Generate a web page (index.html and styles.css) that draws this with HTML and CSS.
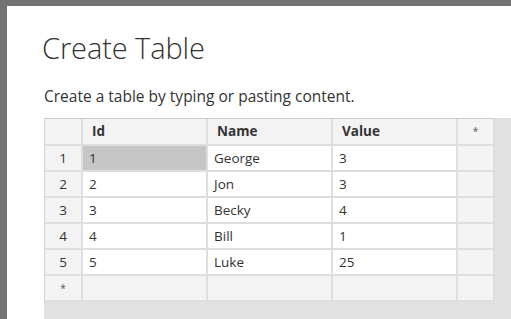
FILE: index.html
```html
<!DOCTYPE html>
<html>
<head>
<meta charset="utf-8">
<link rel="stylesheet" href="styles.css">
</head>
<body>
<div class="dialog">
  <h1 class="title">Create Table</h1>
  <p class="subtitle">Create a table by typing or pasting content.</p>
  <div class="table-area">
    <div class="grid">
      <div class="cell head"></div>
      <div class="cell head col">Id</div>
      <div class="cell head col">Name</div>
      <div class="cell head col">Value</div>
      <div class="cell head star">*</div>

      <div class="cell head num">1</div>
      <div class="cell sel">1</div>
      <div class="cell">George</div>
      <div class="cell">3</div>
      <div class="cell head"></div>

      <div class="cell head num">2</div>
      <div class="cell">2</div>
      <div class="cell">Jon</div>
      <div class="cell">3</div>
      <div class="cell head"></div>

      <div class="cell head num">3</div>
      <div class="cell">3</div>
      <div class="cell">Becky</div>
      <div class="cell">4</div>
      <div class="cell head"></div>

      <div class="cell head num">4</div>
      <div class="cell">4</div>
      <div class="cell">Bill</div>
      <div class="cell">1</div>
      <div class="cell head"></div>

      <div class="cell head num">5</div>
      <div class="cell">5</div>
      <div class="cell">Luke</div>
      <div class="cell">25</div>
      <div class="cell head"></div>

      <div class="cell head star">*</div>
      <div class="cell head"></div>
      <div class="cell head"></div>
      <div class="cell head"></div>
      <div class="cell head"></div>
    </div>
  </div>
</div>
</body>
</html>
```
FILE: styles.css
```css
html, body {
  margin: 0;
  padding: 0;
  height: 100%;
}
body {
  background: #737373;
  padding: 6px 0 0 7px;
  box-sizing: border-box;
  overflow: hidden;
  font-family: "Open Sans", "Noto Sans", sans-serif;
  color: #333;
}
.dialog {
  background: #fff;
  height: 100%;
  padding-left: 37px;
  display: flex;
  flex-direction: column;
}
.title {
  margin: 22px 0 0 -2px;
  font-weight: 300;
  font-size: 29px;
  line-height: 40px;
  color: #333;
  letter-spacing: -0.1px;
}
.subtitle {
  margin: 17px 0 0 0;
  font-size: 15.5px;
  line-height: 22px;
  color: #333;
}
.table-area {
  margin-top: 11px;
  flex: 1;
  background: #e1e1e1;
}
.grid {
  display: grid;
  grid-template-columns: 38px 125px 125px 125px 37px;
  grid-template-rows: 27px repeat(6, 26px);
  width: max-content;
  border-top: 1px solid #cdcdcd;
  border-left: 1px solid #d4d4d4;
}
.cell {
  box-sizing: border-box;
  border-right: 2px solid #dedede;
  border-bottom: 2px solid #dedede;
  background: #fff;
  font-size: 13.5px;
  line-height: 24px;
  padding-left: 6px;
  white-space: nowrap;
}
.head {
  background: #f3f3f3;
}
.col {
  font-weight: 700;
  padding-left: 9px;
  line-height: 25px;
}
.num {
  text-align: center;
  padding-left: 0;
}
.star {
  text-align: center;
  padding-left: 0;
  font-size: 10px;
  color: #555;
}
.sel {
  background: #c6c6c6;
}
```
